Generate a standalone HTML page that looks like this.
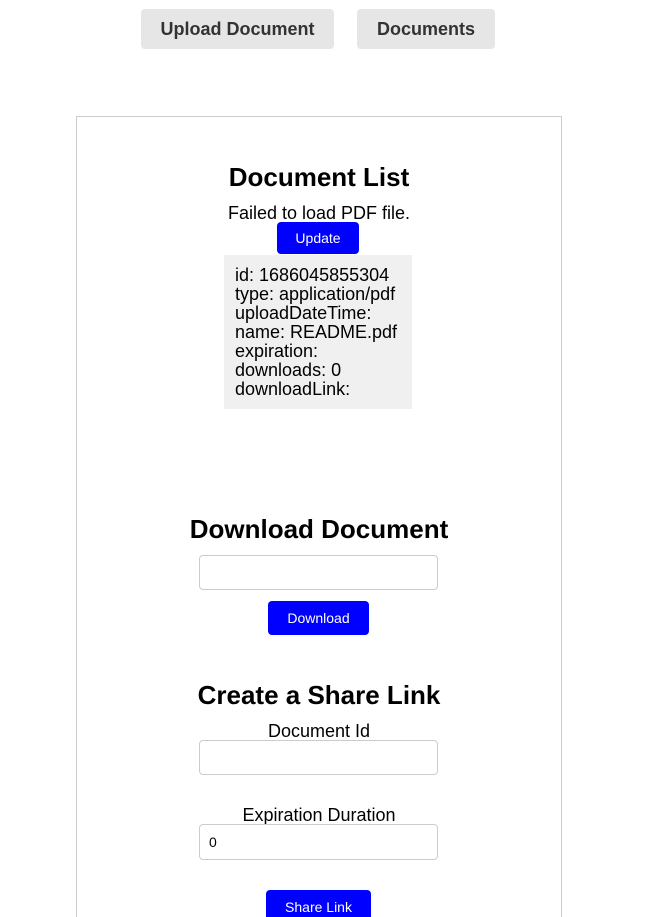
<!DOCTYPE html>
<html><head><meta charset="utf-8"><style>
html,body{margin:0;width:662px;height:917px;overflow:hidden}
body{background:#fff;font-family:"Liberation Sans",sans-serif;position:relative;color:#000}
.a{position:absolute}
.nav{background:#e6e6e6;border-radius:4px;font-weight:bold;font-size:18px;color:#333;display:flex;align-items:center;justify-content:center;top:9px;height:40px}
.card{left:76px;top:116px;width:484px;height:805px;border:1px solid #ccc;border-bottom:none}
.c{left:76px;width:486px;text-align:center}
h2{margin:0;font-size:26px;font-weight:bold}
.t{font-size:18px}
.btn{background:#0000ff;color:#fff;border-radius:4px;font-size:14px;display:flex;align-items:center;justify-content:center}
.inp{border:1px solid #ccc;border-radius:4px;box-sizing:border-box;left:199px;width:239px}
</style></head><body>
<div class="a nav" style="left:141px;width:193px">Upload Document</div>
<div class="a nav" style="left:357px;width:138px">Documents</div>
<div class="a card"></div>
<h2 class="a c" style="top:162px">Document List</h2>
<div class="a c t" style="top:203px">Failed to load PDF file.</div>
<div class="a btn" style="left:277px;top:222px;width:82px;height:32px">Update</div>
<div class="a t" style="left:224px;top:255px;width:177px;background:#f0f0f0;padding-left:11px;padding-top:11px;line-height:19px;height:143px">id: 1686045855304<br>type: application/pdf<br>uploadDateTime:<br>name: README.pdf<br>expiration:<br>downloads: 0<br>downloadLink:</div>
<h2 class="a c" style="top:514px">Download Document</h2>
<div class="a inp" style="top:555px;height:35px"></div>
<div class="a btn" style="left:268px;top:601px;width:101px;height:34px">Download</div>
<h2 class="a c" style="top:680px">Create a Share Link</h2>
<div class="a c t" style="top:721px">Document Id</div>
<div class="a inp" style="top:740px;height:35px"></div>
<div class="a c t" style="top:805px">Expiration Duration</div>
<div class="a inp" style="top:824px;height:36px;font-size:14px;padding-left:9px;line-height:34px">0</div>
<div class="a btn" style="left:266px;top:890px;width:105px;height:34px">Share Link</div>
</body></html>
